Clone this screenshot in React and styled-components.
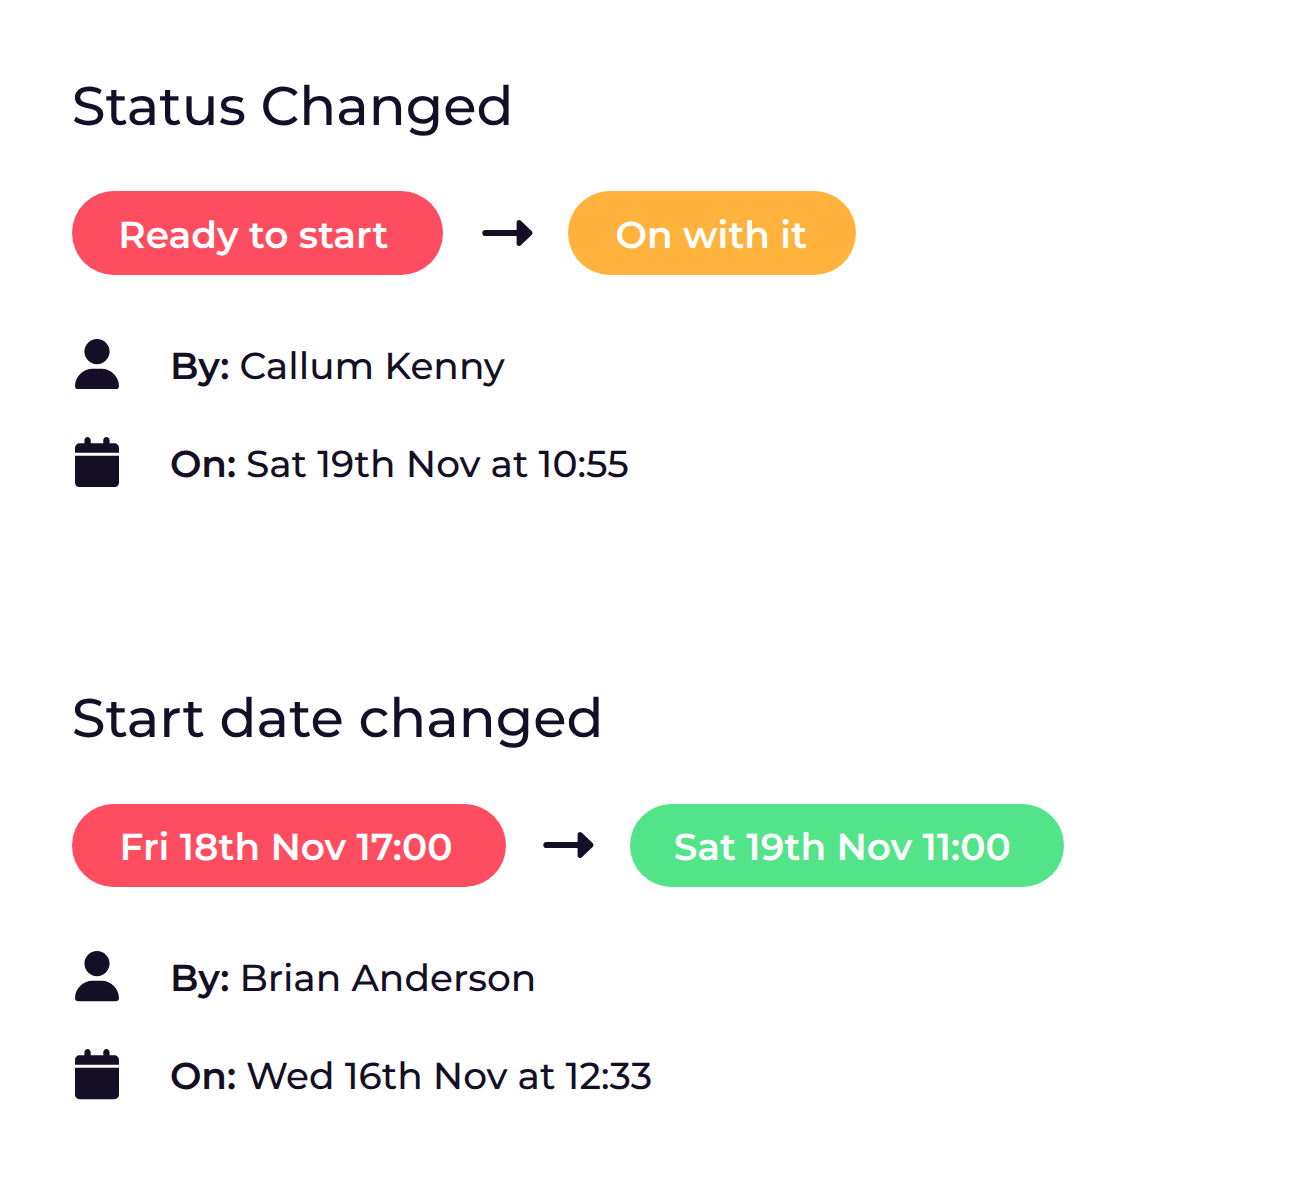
import React from 'react';
import styled, { createGlobalStyle } from 'styled-components';

const GlobalStyle = createGlobalStyle`
  * {
    box-sizing: border-box;
  }

  body {
    margin: 0;
    background: #ffffff;
    color: #140f25;
    font-family: Montserrat, Inter, sans-serif;
    text-rendering: geometricPrecision;
  }
`;

const Page = styled.main`
  display: flex;
  flex-direction: column;
  width: 1300px;
  height: 1183px;
  padding-left: 71.7px;
  overflow: hidden;
`;

const Notification = styled.section`
  height: 612.3px;
  flex: none;
  padding-top: 73px;
`;

const Title = styled.h1`
  margin: 0 0 52.3px;
  height: 66px;
  line-height: 66px;
  font-size: 54.35px;
  font-weight: 500;
  white-space: nowrap;
`;

const Change = styled.div`
  display: flex;
  align-items: center;
  margin-bottom: 40.4px;
`;

const Pill = styled.span`
  display: flex;
  align-items: center;
  width: ${props => props.$width}px;
  height: 83.5px;
  padding: 4px 0 0 ${props => props.$indent}px;
  border-radius: 42px;
  background: ${props => props.$color};
  color: #ffffff;
  font-size: 37.5px;
  font-weight: 600;
  white-space: nowrap;
`;

const Arrow = styled.svg`
  flex: none;
  width: 51px;
  height: 28px;
  margin-left: ${props => props.$before}px;
  margin-right: ${props => props.$after}px;
  fill: currentColor;
`;

const Detail = styled.div`
  display: flex;
  align-items: center;
  height: 98px;
`;

const Icon = styled.svg`
  flex: none;
  width: 44px;
  height: 50.3px;
  margin: 0 51px 0 3.2px;
  fill: currentColor;
`;

const Label = styled.strong`
  width: ${props => props.$width}px;
  padding-top: 4.4px;
  font-size: 37.4px;
  font-weight: 600;
`;

const Value = styled.span`
  padding-top: 4.4px;
  font-size: 37.5px;
  font-weight: 500;
  white-space: nowrap;
`;

const notifications = [
  {
    title: 'Status Changed',
    from: { text: 'Ready to start', color: '#fe4d60', width: 371.2, indent: 46.6 },
    arrow: { before: 39.3, after: 34.5 },
    to: { text: 'On with it', color: '#ffb33c', width: 288.1, indent: 47.8 },
    by: 'Callum Kenny',
    on: 'Sat 19th Nov at 10:55'
  },
  {
    title: 'Start date changed',
    from: { text: 'Fri 18th Nov 17:00', color: '#fe4d60', width: 433.9, indent: 47.8 },
    arrow: { before: 37.9, after: 35.5 },
    to: { text: 'Sat 19th Nov 11:00', color: '#53e48a', width: 433.7, indent: 43.8 },
    by: 'Brian Anderson',
    on: 'Wed 16th Nov at 12:33'
  }
];

const UserIcon = () => (
  <Icon viewBox='0 0 448 512' aria-hidden='true'>
    <path d='M224 256A128 128 0 1 0 224 0a128 128 0 1 0 0 256zm-45.7 48C79.8 304 0 383.8 0 482.3C0 498.7 13.3 512 29.7 512h388.6c16.4 0 29.7-13.3 29.7-29.7C448 383.8 368.2 304 269.7 304h-91.4z' />
  </Icon>
);

const CalendarIcon = () => (
  <Icon viewBox='0 0 448 512' aria-hidden='true'>
    <path d='M96 32v32H48C21.5 64 0 85.5 0 112v48h448v-48c0-26.5-21.5-48-48-48h-48V32c0-17.7-14.3-32-32-32s-32 14.3-32 32v32H160V32c0-17.7-14.3-32-32-32S96 14.3 96 32zM448 192H0v272c0 26.5 21.5 48 48 48h352c26.5 0 48-21.5 48-48V192z' />
  </Icon>
);

const ArrowIcon = ({ before, after }) => (
  <Arrow viewBox='0 0 51 28' $before={before} $after={after} aria-hidden='true'>
    <path d='M3.4 10.9H34.6V3.4c0-2.2 2.4-3.2 4-1.8l11 10.5c1.2 1.1 1.2 2.7 0 3.8l-11 10.5c-1.6 1.4-4 .4-4-1.8v-7.5H3.4a3.1 3.1 0 0 1 0-6.2z' />
  </Arrow>
);

const ChangePill = ({ text, color, width, indent }) => (
  <Pill $color={color} $width={width} $indent={indent}>
    {text}
  </Pill>
);

const App = () => (
  <>
    <GlobalStyle />
    <Page>
      {notifications.map(({ title, from, arrow, to, by, on }) => (
        <Notification key={title}>
          <Title>{title}</Title>
          <Change>
            <ChangePill {...from} />
            <ArrowIcon {...arrow} />
            <ChangePill {...to} />
          </Change>
          <Detail>
            <UserIcon />
            <Label $width={69.5}>By:</Label>
            <Value>{by}</Value>
          </Detail>
          <Detail>
            <CalendarIcon />
            <Label $width={76}>On:</Label>
            <Value>{on}</Value>
          </Detail>
        </Notification>
      ))}
    </Page>
  </>
);

export default App;
